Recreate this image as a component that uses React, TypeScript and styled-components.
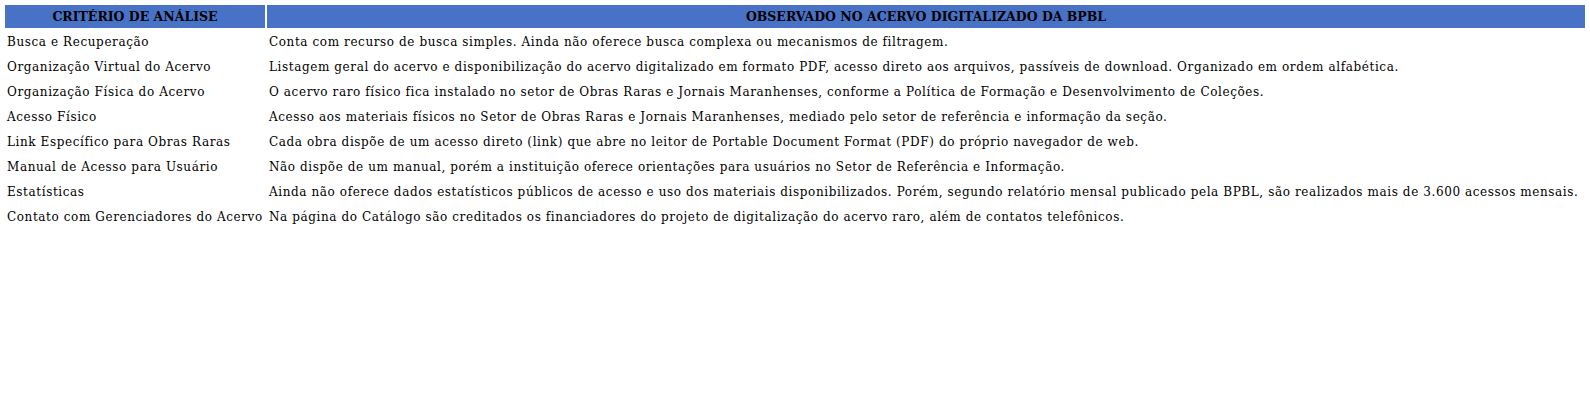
import React from "react";
import styled, { createGlobalStyle } from "styled-components";

const Global = createGlobalStyle`
  html, body { margin: 0; padding: 0; background: #ffffff; }
  body { font-family: "DejaVu Serif", "Liberation Serif", serif; }
`;

const Page = styled.div`
  padding: 3px;
  width: 1584px;
`;

const Table = styled.table`
  width: 1584px;
  border-collapse: separate;
  border-spacing: 2px;
  table-layout: fixed;
`;

const HeadCell = styled.th<{ $w?: number }>`
  width: ${(p) => (p.$w ? `${p.$w}px` : "auto")};
  height: 23px;
  padding: 0;
  background: #4872c6;
  color: #000000;
  font-family: "DejaVu Serif", "Liberation Serif", serif;
  font-weight: bold;
  font-size: 12.5px;
  text-align: center;
  vertical-align: middle;
  white-space: nowrap;
`;

const Row = styled.tr`
  height: 23px;
`;

const Cell = styled.td`
  padding: 1px 2px 0;
  color: #000000;
  font-family: "DejaVu Serif", "Liberation Serif", serif;
  font-size: 12px;
  letter-spacing: 0.6px;
  line-height: 14px;
  vertical-align: middle;
  white-space: nowrap;
  overflow: hidden;
`;

const rows: [string, string][] = [
  ["Busca e Recuperação", "Conta com recurso de busca simples. Ainda não oferece busca complexa ou mecanismos de filtragem."],
  ["Organização Virtual do Acervo", "Listagem geral do acervo e disponibilização do acervo digitalizado em formato PDF, acesso direto aos arquivos, passíveis de download. Organizado em ordem alfabética."],
  ["Organização Física do Acervo", "O acervo raro físico fica instalado no setor de Obras Raras e Jornais Maranhenses, conforme a Política de Formação e Desenvolvimento de Coleções."],
  ["Acesso Físico", "Acesso aos materiais físicos no Setor de Obras Raras e Jornais Maranhenses, mediado pelo setor de referência e informação da seção."],
  ["Link Específico para Obras Raras", "Cada obra dispõe de um acesso direto (link) que abre no leitor de Portable Document Format (PDF) do próprio navegador de web."],
  ["Manual de Acesso para Usuário", "Não dispõe de um manual, porém a instituição oferece orientações para usuários no Setor de Referência e Informação."],
  ["Estatísticas", "Ainda não oferece dados estatísticos públicos de acesso e uso dos materiais disponibilizados. Porém, segundo relatório mensal publicado pela BPBL, são realizados mais de 3.600 acessos mensais."],
  ["Contato com Gerenciadores do Acervo", "Na página do Catálogo são creditados os financiadores do projeto de digitalização do acervo raro, além de contatos telefônicos."],
];

export default function App() {
  return (
    <>
      <Global />
      <Page>
        <Table>
          <thead>
            <tr>
              <HeadCell $w={260}>CRITÉRIO DE ANÁLISE</HeadCell>
              <HeadCell>OBSERVADO NO ACERVO DIGITALIZADO DA BPBL</HeadCell>
            </tr>
          </thead>
          <tbody>
            {rows.map(([a, b]) => (
              <Row key={a}>
                <Cell>{a}</Cell>
                <Cell>{b}</Cell>
              </Row>
            ))}
          </tbody>
        </Table>
      </Page>
    </>
  );
}
